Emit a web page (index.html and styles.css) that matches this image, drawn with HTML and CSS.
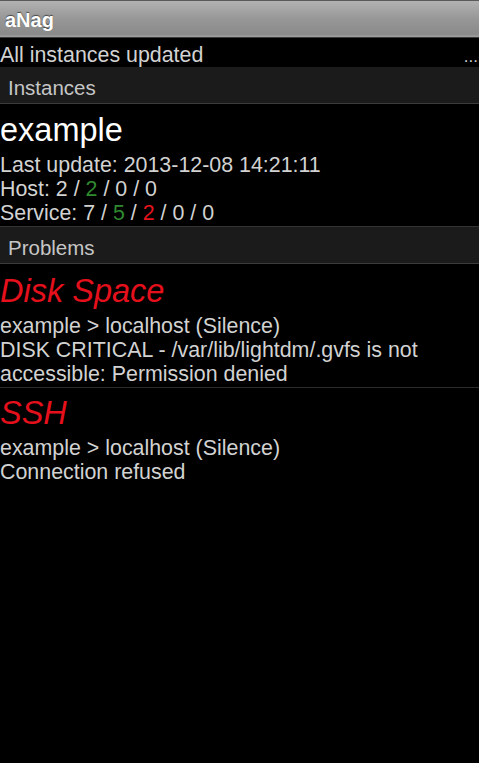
FILE: index.html
```html
<!DOCTYPE html>
<html lang="en">
<head>
  <meta charset="UTF-8" />
  <meta name="viewport" content="width=device-width, initial-scale=1.0" />
  <title>aNag</title>
  <link rel="stylesheet" href="styles.css">
</head>
<body>
  <div class="titlebar">aNag</div>

  <div class="status">
    <span>All instances updated</span>
    <span class="more">...</span>
  </div>

  <div class="section-head">Instances</div>
  <div class="instance">
    <div class="instance-name">example</div>
    <div class="line">Last update: 2013-12-08 14:21:11</div>
    <div class="line">Host: 2 / <span class="ok">2</span> / 0 / 0</div>
    <div class="line">Service: 7 / <span class="ok">5</span> / <span class="crit">2</span> / 0 / 0</div>
  </div>

  <div class="section-head top-line">Problems</div>
  <div class="problem">
    <div class="problem-title">Disk Space</div>
    <div class="line">example &gt; localhost (Silence)</div>
    <div class="line">DISK CRITICAL - /var/lib/lightdm/.gvfs is not accessible: Permission denied</div>
  </div>
  <div class="problem">
    <div class="problem-title">SSH</div>
    <div class="line">example &gt; localhost (Silence)</div>
    <div class="line">Connection refused</div>
  </div>
</body>
</html>
```

FILE: styles.css
```css
html, body {
  margin: 0;
  padding: 0;
  background: #000;
  color: #d2d2d2;
  font-family: "Liberation Sans", Arial, sans-serif;
  font-size: 21.4px;
}
.titlebar {
  height: 36px;
  line-height: 38px;
  padding-left: 5px;
  border-top: 1px solid #5a5a5a;
  border-bottom: 1px solid #3a3a3a;
  background: linear-gradient(#b2b2b2, #979797 50%, #8a8a8a 92%, #a0a0a0);
  color: #fff;
  font-weight: bold;
  font-size: 20px;
  text-shadow: 0 -1px 1px rgba(0,0,0,0.55);
}
.status {
  display: flex;
  justify-content: space-between;
  align-items: baseline;
  height: 29px;
  line-height: 34px;
}
.more {
  font-size: 17px;
  padding-right: 1px;
  color: #cfcfcf;
}
.section-head {
  height: 36px;
  line-height: 41px;
  padding-left: 8px;
  background: #1b1b1b;
  border-bottom: 1px solid #3c3c3c;
  color: #c6c6c6;
  font-size: 20.5px;
}
.top-line {
  border-top: 1px solid #333;
}
.instance {
  padding-bottom: 1px;
}
.instance-name {
  height: 49px;
  line-height: 52px;
  font-size: 32.5px;
  color: #fff;
}
.line {
  line-height: 24px;
}
.ok {
  color: #2f8a2f;
}
.crit {
  color: #e3141e;
}
.problem {
  padding: 4px 0 1px;
  border-bottom: 1px solid #2c2c2c;
}
.problem + .problem {
  padding-top: 2px;
}
.problem:last-child {
  border-bottom: none;
}
.problem-title {
  line-height: 46px;
  font-size: 32.5px;
  font-style: italic;
  color: #e5101c;
}
```
